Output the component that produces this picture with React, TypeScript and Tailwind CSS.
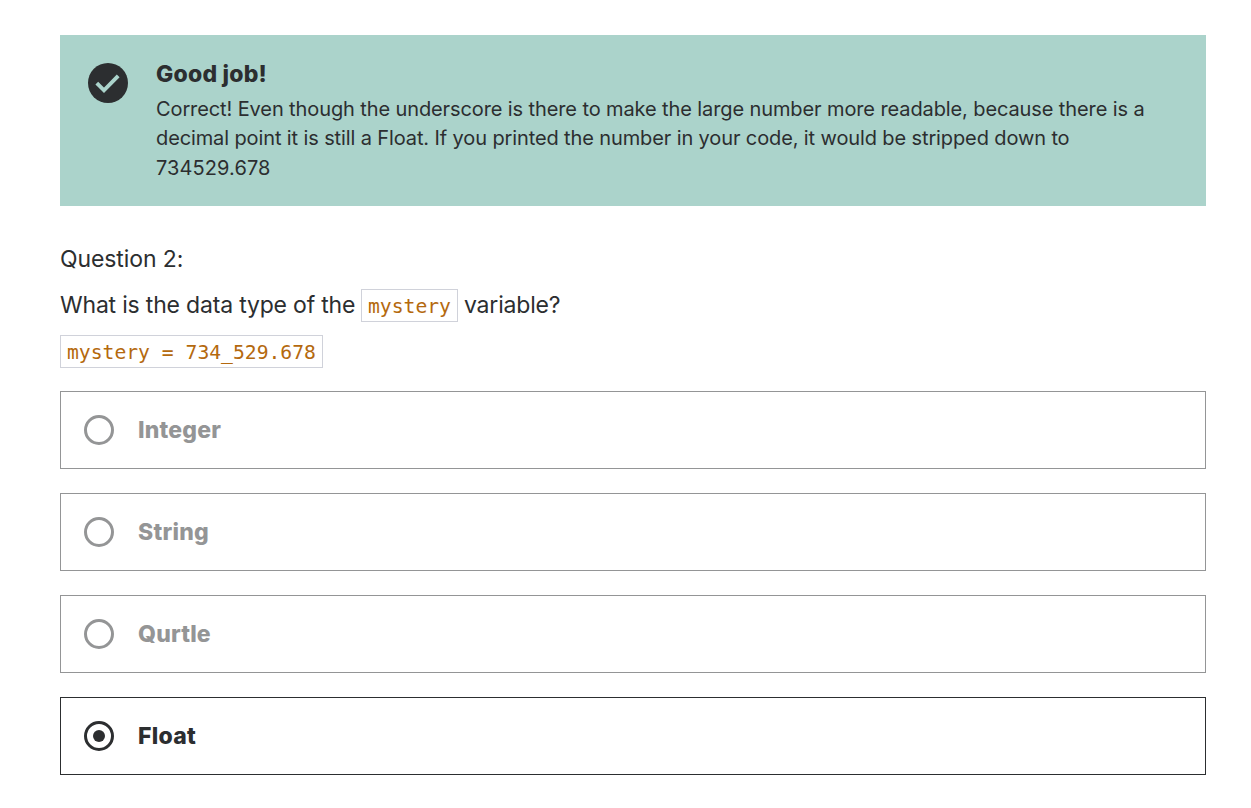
const options = [
  { label: 'Integer', tracking: 'tracking-[0.2px]' },
  { label: 'String', tracking: 'tracking-[0.25px]' },
  { label: 'Qurtle', tracking: 'tracking-[0.15px]' },
  { label: 'Float', tracking: 'tracking-[0.25px]' },
];
const selected = 'Float';

export default function App() {
  return (
    <main className="min-h-[808px] bg-white pt-[35px] pl-[60px] pr-[45px] font-['Inter',sans-serif] text-[#2c2e30]">
      <section className="flex h-[171px] bg-[#abd3cb] pl-7 pt-6">
        <svg className="mt-1 h-10 w-10 shrink-0" viewBox="0 0 40 40" fill="none">
          <circle cx="20" cy="20" r="20" fill="#2c2e30" />
          <path d="M8.8 20.1 16 27.3 30.2 12.9" stroke="#abd3cb" strokeWidth="3.9" />
        </svg>
        <div className="ml-7">
          <h2 className="text-[23px] leading-[30px] font-extrabold tracking-[0.2px]">Good job!</h2>
          <p className="mt-[6px] text-[20px] leading-[29.3px] whitespace-nowrap">
            <span className="block tracking-[-0.107px]">Correct! Even though the underscore is there to make the large number more readable, because there is a</span>
            <span className="block tracking-[-0.117px]">decimal point it is still a Float. If you printed the number in your code, it would be stripped down to</span>
            <span className="block tracking-[0.1px]">734529.678</span>
          </p>
        </div>
      </section>
      <div className="mt-[36px] flex flex-col text-[23px] leading-[34px]">
        <p className="tracking-[-0.1px]">Question 2:</p>
        <p className="mt-[13px] flex h-[33px] items-center whitespace-nowrap tracking-[-0.19px]">
          <span className="w-[295px] shrink-0 pb-0.5">What is the data type of the</span>
          <code className="mx-[6px] flex h-[33px] w-[97px] shrink-0 items-center border border-[#d0d2da] px-[6px] pt-0.5 font-['DejaVu_Sans_Mono',monospace] text-[19.7px] tracking-normal text-[#b4690e]">mystery</code>
          <span className="pb-0.5">variable?</span>
        </p>
        <code className="mt-[13px] flex h-[33px] w-[263px] items-center whitespace-pre border border-[#d0d2da] px-[6px] pt-0.5 font-['DejaVu_Sans_Mono',monospace] text-[19.7px] text-[#b4690e]">mystery = 734_529.678</code>
      </div>
      <div className="mt-[23px] flex flex-col gap-6">
        {options.map(({ label, tracking }) => {
          const on = label === selected;
          return (
            <div key={label} className={`flex h-[78px] items-center border pl-[23px] ${on ? 'border-[#2c2e30] text-[#2c2e30]' : 'border-[#949596] text-[#949596]'}`}>
              <svg className="h-[30px] w-[30px]" viewBox="0 0 30 30" fill="none">
                <circle cx="15" cy="15" r="13.5" stroke="currentColor" strokeWidth="3" />
                {on && <circle cx="15" cy="15" r="6" fill="currentColor" />}
              </svg>
              <span className={`ml-6 pb-px text-[23px] leading-[34px] font-extrabold ${tracking}`}>{label}</span>
            </div>
          );
        })}
      </div>
    </main>
  );
}
